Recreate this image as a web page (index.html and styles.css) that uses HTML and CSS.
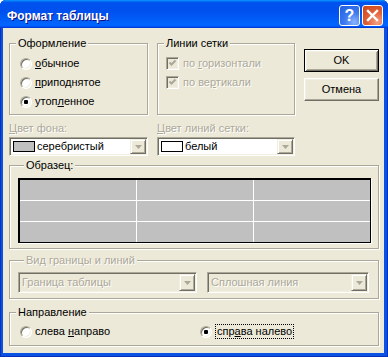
FILE: index.html
```html
<!DOCTYPE html>
<html lang="ru">
<head>
<meta charset="utf-8">
<title>Формат таблицы</title>
<link rel="stylesheet" href="styles.css">
</head>
<body>
<div class="window">
  <div class="titlebar">
    <span class="title">Формат таблицы</span>
    <div class="tb-buttons">
      <span class="tb-btn help">?</span>
      <span class="tb-btn close"><svg width="21" height="21" viewBox="0 0 21 21"><path d="M6 6 L15 15 M15 6 L6 15" stroke="#fff" stroke-width="2.4" stroke-linecap="square"/></svg></span>
    </div>
  </div>
  <div class="client">
    <div class="row-top">
      <div class="group g-style">
        <div class="legend">Оформление</div>
        <div class="opts">
          <div class="opt"><span class="radio"></span><span><u>о</u>бычное</span></div>
          <div class="opt"><span class="radio"></span><span><u>п</u>риподнятое</span></div>
          <div class="opt"><span class="radio checked"></span><span>утоп<u>л</u>енное</span></div>
        </div>
      </div>
      <div class="group g-grid">
        <div class="legend">Линии сетки</div>
        <div class="opts">
          <div class="opt chk"><span class="checkbox"><svg width="13" height="13" viewBox="0 0 13 13"><path d="M3.5 5.5 L5.5 7.5 L9.5 3.5" fill="none" stroke="#aca899" stroke-width="2"/></svg></span><span class="dis">по <u>г</u>оризонтали</span></div>
          <div class="opt chk"><span class="checkbox"><svg width="13" height="13" viewBox="0 0 13 13"><path d="M3.5 5.5 L5.5 7.5 L9.5 3.5" fill="none" stroke="#aca899" stroke-width="2"/></svg></span><span class="dis">по ве<u>р</u>тикали</span></div>
        </div>
      </div>
      <div class="buttons">
        <button class="btn default">OK</button>
        <button class="btn">Отмена</button>
      </div>
    </div>

    <div class="row-colors">
      <div class="color-col c1">
        <div class="lbl dis"><u>Ц</u>вет фона:</div>
        <div class="combo">
          <span class="swatch silver"></span>
          <span class="ctext">серебристый</span>
          <span class="ddbtn"><svg width="7" height="4" viewBox="0 0 7 4"><path d="M0 0 H7 L3.5 4 Z" fill="#aca899"/></svg></span>
        </div>
      </div>
      <div class="color-col c2">
        <div class="lbl dis"><u>Ц</u>вет линий сетки:</div>
        <div class="combo">
          <span class="swatch white"></span>
          <span class="ctext">белый</span>
          <span class="ddbtn"><svg width="7" height="4" viewBox="0 0 7 4"><path d="M0 0 H7 L3.5 4 Z" fill="#aca899"/></svg></span>
        </div>
      </div>
    </div>

    <div class="group g-sample">
      <div class="legend">Образец:</div>
      <div class="sample">
        <span></span><span></span><span></span>
        <span></span><span></span><span></span>
        <span></span><span></span><span></span>
      </div>
    </div>

    <div class="group g-border">
      <div class="legend dis">Ви<u>д</u> границы и линий</div>
      <div class="border-row">
        <div class="combo big disabled b1">
          <span class="ctext dis">Граница таблицы</span>
          <span class="ddbtn"><svg width="7" height="4" viewBox="0 0 7 4"><path d="M0 0 H7 L3.5 4 Z" fill="#aca899"/></svg></span>
        </div>
        <div class="combo big disabled b2">
          <span class="ctext dis">Сплошная линия</span>
          <span class="ddbtn"><svg width="7" height="4" viewBox="0 0 7 4"><path d="M0 0 H7 L3.5 4 Z" fill="#aca899"/></svg></span>
        </div>
      </div>
    </div>

    <div class="group g-dir">
      <div class="legend">Направление</div>
      <div class="dir-row">
        <div class="opt d1"><span class="radio"></span><span>слева <u>н</u>аправо</span></div>
        <div class="opt d2"><span class="radio checked"></span><span class="focus">спр<u>а</u>ва налево</span></div>
      </div>
    </div>
  </div>
</div>
</body>
</html>
```

FILE: styles.css
```css
html, body {
  margin: 0;
  padding: 0;
  background: #ffffff;
}

body {
  font-family: "Liberation Sans", Arial, sans-serif;
  font-size: 11px;
  line-height: 13px;
  color: #000;
}

.window {
  width: 388px;
  height: 357px;
  box-sizing: border-box;
  display: flex;
  flex-direction: column;
  background: #0a52e4;
  box-shadow: inset 1px 0 #0831b8, inset -1px 0 #0831b8, inset 0 -1px #0831b8;
  border-radius: 6px 6px 0 0;
  overflow: hidden;
}

.titlebar {
  flex: none;
  height: 28px;
  box-sizing: border-box;
  display: flex;
  align-items: center;
  justify-content: space-between;
  padding: 0 5px 0 7px;
  background: linear-gradient(to bottom, #0997ff 0%, #0053ee 9%, #0050ee 40%, #0062fb 80%, #0066ff 90%, #005bff 94%, #003dd7 97%, #003dd7 100%);
}

.title {
  color: #fff;
  font-weight: bold;
  font-size: 12px;
  line-height: 14px;
  padding-top: 3px;
  text-shadow: 1px 1px 0 #0f1089;
}

.tb-buttons {
  display: flex;
  gap: 2px;
  padding-top: 3px;
}

.tb-btn {
  width: 21px;
  height: 21px;
  box-sizing: border-box;
  border: 1px solid #fff;
  border-radius: 3px;
  display: flex;
  align-items: center;
  justify-content: center;
  color: #fff;
  overflow: hidden;
}

.tb-btn svg {
  flex: none;
  margin: -1px;
}

.help {
  background: radial-gradient(circle at 75% 85%, #8ab4fb 0%, #3d79ef 45%, #1f5ddf 100%);
  font-family: "Liberation Sans", Arial, sans-serif;
  font-weight: bold;
  font-size: 16px;
  line-height: 19px;
}

.close {
  background: radial-gradient(circle at 75% 85%, #f6a286 0%, #e2623a 45%, #cb4317 100%);
}

.client {
  flex: 1;
  margin: 0 4px 4px 3px;
  background: #ece9d8;
  padding: 0 5px 0 6px;
  display: flex;
  flex-direction: column;
}

u {
  text-decoration: underline;
  text-underline-offset: 1px;
}

.dis {
  color: #aca899;
  text-shadow: 1px 1px 0 #fff;
}

/* group boxes */
.group {
  box-sizing: border-box;
  border: 1px solid #aca899;
  box-shadow: inset 1px 1px 0 #fff, 1px 1px 0 #fff;
}

.legend {
  width: max-content;
  height: 13px;
  margin: -7px 0 0 6px;
  padding: 0 2px;
  background: #ece9d8;
}

.row-top {
  display: flex;
  align-items: flex-start;
  gap: 9px;
  margin-top: 15px;
}

.g-style {
  width: 139px;
  height: 72px;
}

.g-grid {
  width: 138px;
  height: 72px;
}

.opts {
  margin-top: 4px;
}

.opt {
  display: flex;
  align-items: center;
  height: 19px;
  gap: 3px;
  padding-left: 10px;
}

.opt.chk {
  padding-left: 8px;
  gap: 4px;
}

.radio {
  flex: none;
  width: 12px;
  height: 12px;
  box-sizing: border-box;
  border-radius: 50%;
  border: 1px solid;
  border-color: #aca899 #fff #fff #aca899;
  box-shadow: inset 1px 1px 0 #716f64, inset -1px -1px 0 #f1efe2;
  background: #fff;
  display: flex;
  align-items: center;
  justify-content: center;
}

.radio.checked::after {
  content: "";
  width: 4px;
  height: 4px;
  border-radius: 1px;
  background: #000;
}

.checkbox {
  flex: none;
  width: 13px;
  height: 13px;
  box-sizing: border-box;
  border: 1px solid;
  border-color: #aca899 #fff #fff #aca899;
  box-shadow: inset 1px 1px 0 #716f64, inset -1px -1px 0 #f1efe2;
  background: #ece9d8;
  position: relative;
}

.checkbox svg {
  display: block;
  margin: -1px;
}

.buttons {
  width: 75px;
  display: flex;
  flex-direction: column;
  gap: 6px;
  margin-top: 6px;
}

.btn {
  height: 23px;
  box-sizing: border-box;
  margin: 0;
  padding: 0;
  font: inherit;
  color: #000;
  background: #ece9d8;
  border: 1px solid;
  border-color: #fff #716f64 #716f64 #fff;
  box-shadow: inset -1px -1px 0 #aca899, inset 1px 1px 0 #f1efe2;
}

.btn.default {
  border: 1px solid #000;
  box-shadow: inset 1px 1px 0 #fff, inset -1px -1px 0 #716f64, inset 2px 2px 0 #f1efe2, inset -2px -2px 0 #aca899;
}

/* colour rows */
.row-colors {
  display: flex;
  gap: 9px;
  margin-top: 7px;
}

.c1 {
  width: 139px;
}

.c2 {
  width: 138px;
}

.lbl {
  height: 13px;
}

.combo {
  height: 19px;
  box-sizing: border-box;
  margin-top: 2px;
  border: 1px solid;
  border-color: #aca899 #fff #fff #aca899;
  box-shadow: inset 1px 1px 0 #716f64, inset -1px -1px 0 #f1efe2;
  background: #fff;
  display: flex;
  align-items: center;
  padding: 0 1px 0 3px;
}

.swatch {
  flex: none;
  width: 22px;
  height: 11px;
  box-sizing: border-box;
  border: 1px solid #000;
  margin-right: 2px;
}

.swatch.silver {
  background: #c0c0c0;
}

.swatch.white {
  background: #fff;
}

.ctext {
  flex: 1;
  white-space: nowrap;
}

.ddbtn {
  flex: none;
  width: 16px;
  height: 15px;
  box-sizing: border-box;
  border: 1px solid;
  border-color: #f1efe2 #716f64 #716f64 #f1efe2;
  box-shadow: inset 1px 1px 0 #fff, inset -1px -1px 0 #aca899;
  background: #ece9d8;
  display: flex;
  align-items: center;
  justify-content: center;
}

.ddbtn svg {
  display: block;
  margin-top: 1px;
}

/* sample */
.g-sample {
  margin-top: 9px;
  padding: 0 7px 5px 8px;
}

.sample {
  margin-top: 6px;
  width: 353px;
  height: 65px;
  box-sizing: border-box;
  border-style: solid;
  border-color: #000;
  border-width: 2px 1px 1px 2px;
  box-shadow: 1px 1px 0 #fff;
  background: #fff;
  display: grid;
  grid-template-columns: repeat(3, 1fr);
  grid-template-rows: repeat(3, 1fr);
  gap: 1px;
}

.sample span {
  background: #c0c0c0;
}

/* border kind */
.g-border {
  margin-top: 11px;
  padding: 0 8px 5px 8px;
}

.border-row {
  display: flex;
  gap: 10px;
  margin-top: 5px;
}

.combo.big {
  height: 21px;
  margin-top: 0;
}

.combo.big .ddbtn {
  height: 17px;
}

.combo.disabled {
  background: #ece9d8;
}

.b1 {
  width: 179px;
}

.b2 {
  width: 162px;
}

/* direction */
.g-dir {
  margin-top: 13px;
  padding-bottom: 4px;
}

.dir-row {
  display: flex;
  margin-top: 3px;
}

.d1 {
  width: 180px;
}

.d2 {
  padding-left: 0;
  gap: 4px;
}

.focus {
  outline: 1px dotted #000;
  outline-offset: 0;
  padding: 0 1px;
  line-height: 13px;
}
```
